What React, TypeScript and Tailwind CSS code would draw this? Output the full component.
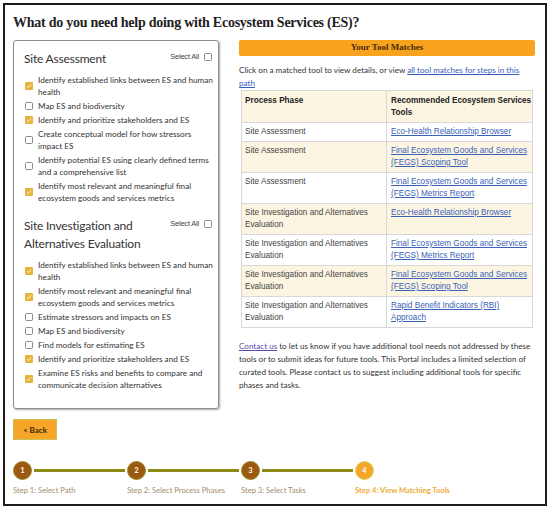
import React from "react";

const sans = { fontFamily: '"Lato", "Open Sans", sans-serif' };
const serif = { fontFamily: '"Liberation Serif", "DejaVu Serif", serif' };
const arial = { fontFamily: '"Liberation Sans", Arial, sans-serif' };

type Item = [string[], boolean];

const section1: Item[] = [
  [["Identify established links between ES and human", "health"], true],
  [["Map ES and biodiversity"], false],
  [["Identify and prioritize stakeholders and ES"], true],
  [["Create conceptual model for how stressors", "impact ES"], false],
  [["Identify potential ES using clearly defined terms", "and a comprehensive list"], false],
  [["Identify most relevant and meaningful final", "ecosystem goods and services metrics"], true],
];

const section2: Item[] = [
  [["Identify established links between ES and human", "health"], true],
  [["Identify most relevant and meaningful final", "ecosystem goods and services metrics"], true],
  [["Estimate stressors and impacts on ES"], false],
  [["Map ES and biodiversity"], false],
  [["Find models for estimating ES"], false],
  [["Identify and prioritize stakeholders and ES"], true],
  [["Examine ES risks and benefits to compare and", "communicate decision alternatives"], true],
];

const rows: [string[], string[]][] = [
  [["Site Assessment"], ["Eco-Health Relationship Browser"]],
  [["Site Assessment"], ["Final Ecosystem Goods and Services", "(FEGS) Scoping Tool"]],
  [["Site Assessment"], ["Final Ecosystem Goods and Services", "(FEGS) Metrics Report"]],
  [["Site Investigation and Alternatives", "Evaluation"], ["Eco-Health Relationship Browser"]],
  [["Site Investigation and Alternatives", "Evaluation"], ["Final Ecosystem Goods and Services", "(FEGS) Metrics Report"]],
  [["Site Investigation and Alternatives", "Evaluation"], ["Final Ecosystem Goods and Services", "(FEGS) Scoping Tool"]],
  [["Site Investigation and Alternatives", "Evaluation"], ["Rapid Benefit Indicators (RBI)", "Approach"]],
];

function Box({ checked }: { checked: boolean }) {
  if (checked) {
    return (
      <span className="flex h-[8px] w-[8px] shrink-0 items-center justify-center rounded-[1px] bg-[#e6b43c]">
        <svg width="6" height="6" viewBox="0 0 10 10">
          <path d="M1.5 5.2 L4 7.6 L8.6 2.2" stroke="#fff6d8" strokeWidth="1.6" fill="none" />
        </svg>
      </span>
    );
  }
  return <span className="h-[8px] w-[8px] shrink-0 rounded-[1.5px] border border-[#8a8a8a] bg-white" />;
}

function Lines({ lines }: { lines: string[] }) {
  return (
    <>
      {lines.map((l, j) => (
        <React.Fragment key={j}>
          {j > 0 && <br />}
          {l}
        </React.Fragment>
      ))}
    </>
  );
}

function Section({ title, items }: { title: React.ReactNode; items: Item[] }) {
  return (
    <div>
      <div className="flex items-start justify-between">
        <div className="whitespace-nowrap text-[12px] leading-[18px] tracking-[-0.2px] text-[#333]" style={sans}>
          {title}
        </div>
        <div className="mt-[1px] flex items-center gap-[5px] pr-[2px]">
          <span className="text-[7.5px] tracking-[-0.2px] text-[#444]" style={arial}>Select All</span>
          <Box checked={false} />
        </div>
      </div>
      <div className="mt-[6px] flex flex-col gap-[2px]">
        {items.map(([lines, c], i) => (
          <div key={i} className="flex items-center gap-[5px] pl-[1px]">
            <Box checked={c} />
            <span className="whitespace-nowrap text-[8.2px] leading-[12px] text-[#333]" style={sans}>
              <Lines lines={lines} />
            </span>
          </div>
        ))}
      </div>
    </div>
  );
}

function Step({ n, label, active, line }: { n: number; label: string; active?: boolean; line?: boolean }) {
  return (
    <div className="flex w-[114px] flex-col">
      <div className="flex items-center">
        <div
          className={`flex h-[19px] w-[19px] shrink-0 items-center justify-center rounded-full border-[1.5px] text-[7px] font-bold text-white ${
            active ? "border-[#d8d860] bg-[#f5a52a]" : "border-[#9a8a2a] bg-[#9b5a0f]"
          }`}
          style={sans}
        >
          {n}
        </div>
        {line && <div className="mx-[2px] h-[3px] flex-1 bg-[#8a8a14]" />}
      </div>
      <div
        className={`mt-[5px] whitespace-nowrap text-[7.6px] ${active ? "font-bold text-[#f0aa3a]" : "text-[#a48c6c]"}`}
        style={sans}
      >
        {label}
      </div>
    </div>
  );
}

export default function App() {
  return (
    <div className="h-[509px] w-[550px] bg-white p-[3px]">
      <div className="h-[503px] border-2 border-[#1c1c1c] px-[8px] pt-[8px]">
        <h1 className="text-[14px] font-bold leading-[20px] tracking-[-0.25px] text-[#222]" style={serif}>
          What do you need help doing with Ecosystem Services (ES)?
        </h1>
        <div className="mt-[7px] flex gap-[20px]">
          <div className="h-[369px] w-[206px] shrink-0 rounded-[3px] border border-[#8c8c8c] pl-[10px] pr-[4px] pt-[9px] shadow-[1px_1px_2px_rgba(0,0,0,0.35)]">
            <Section title="Site Assessment" items={section1} />
            <div className="mt-[13px]">
              <Section title={<>Site Investigation and<br />Alternatives Evaluation</>} items={section2} />
            </div>
          </div>
          <div className="w-[296px]">
            <div className="flex h-[16px] items-center justify-center rounded-[2px] bg-[#f8a31e] text-[9px] font-bold text-[#4a2a0a]" style={serif}>
              Your Tool Matches
            </div>
            <p className="mt-[8px] whitespace-nowrap text-[8.1px] leading-[13px] text-[#333]" style={sans}>
              Click on a matched tool to view details, or view{" "}
              <span className="text-[#3a5cc0] underline">all tool matches for steps in this</span>
              <br />
              <span className="text-[#3a5cc0] underline">path</span>
            </p>
            <table className="ml-[2px] w-[291px] table-fixed border-collapse text-[8.2px] leading-[12px]" style={arial}>
              <colgroup>
                <col className="w-[145px]" />
                <col className="w-[146px]" />
              </colgroup>
              <thead>
                <tr className="bg-[#fcf5e2]">
                  <th className="border border-[#d8d8d8] px-[3px] pb-[3px] pt-[4px] text-left align-top font-bold text-[#222]">
                    Process Phase
                  </th>
                  <th className="whitespace-nowrap border border-[#d8d8d8] px-[4px] pb-[3px] pt-[4px] text-left align-top font-bold text-[#222]">
                    Recommended Ecosystem Services
                    <br />
                    Tools
                  </th>
                </tr>
              </thead>
              <tbody>
                {rows.map(([a, b], i) => (
                  <tr key={i} className={i % 2 === 1 ? "bg-[#fcf5e2]" : "bg-white"}>
                    <td className="whitespace-nowrap border border-[#d8d8d8] px-[3px] pb-[3px] pt-[3px] align-top text-[#444]">
                      <Lines lines={a} />
                    </td>
                    <td className="whitespace-nowrap border border-[#d8d8d8] px-[4px] pb-[3px] pt-[3px] align-top text-[#3a62b8]">
                      <span className="underline">
                        <Lines lines={b} />
                      </span>
                    </td>
                  </tr>
                ))}
              </tbody>
            </table>
            <p className="mt-[12px] whitespace-nowrap text-[8.1px] leading-[13px] text-[#333]" style={sans}>
              <span className="text-[#5a4aa8] underline">Contact us</span> to let us know if you have additional tool needs not addressed by these
              <br />
              tools or to submit ideas for future tools. This Portal includes a limited selection of
              <br />
              curated tools. Please contact us to suggest including additional tools for specific
              <br />
              phases and tasks.
            </p>
          </div>
        </div>
        <button
          className="mt-[10px] flex h-[21px] w-[44px] items-center justify-center border border-[#c8c25a] bg-[#f7a529] text-[8px] font-bold text-[#3a2408]"
          style={sans}
        >
          &lt; Back
        </button>
        <div className="mt-[21px] flex">
          <Step n={1} label="Step 1: Select Path" line />
          <Step n={2} label="Step 2: Select Process Phases" line />
          <Step n={3} label="Step 3: Select Tasks" line />
          <Step n={4} label="Step 4: View Matching Tools" active />
        </div>
      </div>
    </div>
  );
}
